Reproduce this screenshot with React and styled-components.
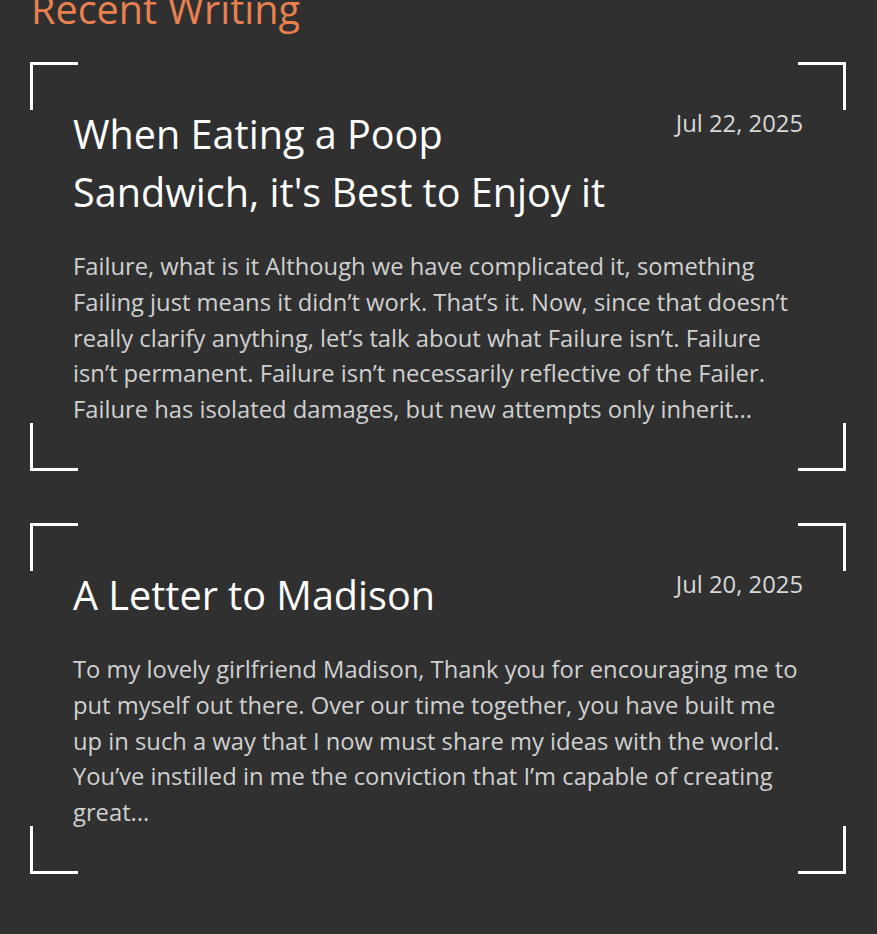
import styled, { createGlobalStyle } from "styled-components";

const posts = [
  {
    title: "When Eating a Poop Sandwich, it's Best to Enjoy it",
    date: "Jul 22, 2025",
    excerpt:
      "Failure, what is it Although we have complicated it, something Failing just means it didn’t work. That’s it. Now, since that doesn’t really clarify anything, let’s talk about what Failure isn’t. Failure isn’t permanent. Failure isn’t necessarily reflective of the Failer. Failure has isolated damages, but new attempts only inherit...",
  },
  {
    title: "A Letter to Madison",
    date: "Jul 20, 2025",
    excerpt:
      "To my lovely girlfriend Madison, Thank you for encouraging me to put myself out there. Over our time together, you have built me up in such a way that I now must share my ideas with the world. You’ve instilled in me the conviction that I’m capable of creating great...",
  },
];

export default function App() {
  return (
    <>
      <GlobalStyle />
      <Page>
        <Heading>Recent Writing</Heading>
        <PostList>
          {posts.map((post) => (
            <PostCard key={post.title}>
              <PostHeader>
                <PostTitle>{post.title}</PostTitle>
                <PostDate>{post.date}</PostDate>
              </PostHeader>
              <Excerpt>{post.excerpt}</Excerpt>
            </PostCard>
          ))}
        </PostList>
      </Page>
    </>
  );
}

const GlobalStyle = createGlobalStyle`
  html, body {
    margin: 0;
    background: #303030;
    font-family: "Open Sans", "Noto Sans", sans-serif;
  }
`;

const Page = styled.main`
  min-height: 100vh;
  padding: 0 31px 40px 30px;
  background: #303030;
  overflow: hidden;
`;

const Heading = styled.h2`
  margin: -15px 0 29px 1px;
  font-size: 39.6px;
  line-height: 48px;
  font-weight: 400;
  color: #e8804f;
`;

const PostList = styled.div`
  display: flex;
  flex-direction: column;
  gap: 52.5px;
`;

const corner = "linear-gradient(#fff, #fff)";

const PostCard = styled.article`
  padding: 43px 43px;
  background:
    ${corner} top left / 48px 3px no-repeat,
    ${corner} top left / 3px 48px no-repeat,
    ${corner} top right / 48px 3px no-repeat,
    ${corner} top right / 3px 48px no-repeat,
    ${corner} bottom left / 48px 3px no-repeat,
    ${corner} bottom left / 3px 48px no-repeat,
    ${corner} bottom right / 48px 3px no-repeat,
    ${corner} bottom right / 3px 48px no-repeat;
`;

const PostHeader = styled.div`
  display: flex;
  justify-content: space-between;
  align-items: flex-start;
  gap: 40px;
  margin-bottom: 28.3px;
`;

const PostTitle = styled.h3`
  margin: 0;
  flex: 1;
  max-width: 550px;
  font-size: 39.6px;
  line-height: 58px;
  font-weight: 400;
  color: #ffffff;
`;

const PostDate = styled.span`
  font-size: 23.8px;
  line-height: 36px;
  color: #d8d8d8;
  white-space: nowrap;
`;

const Excerpt = styled.p`
  margin: 0;
  font-size: 23.76px;
  line-height: 35.64px;
  color: #d0d0d0;
`;
